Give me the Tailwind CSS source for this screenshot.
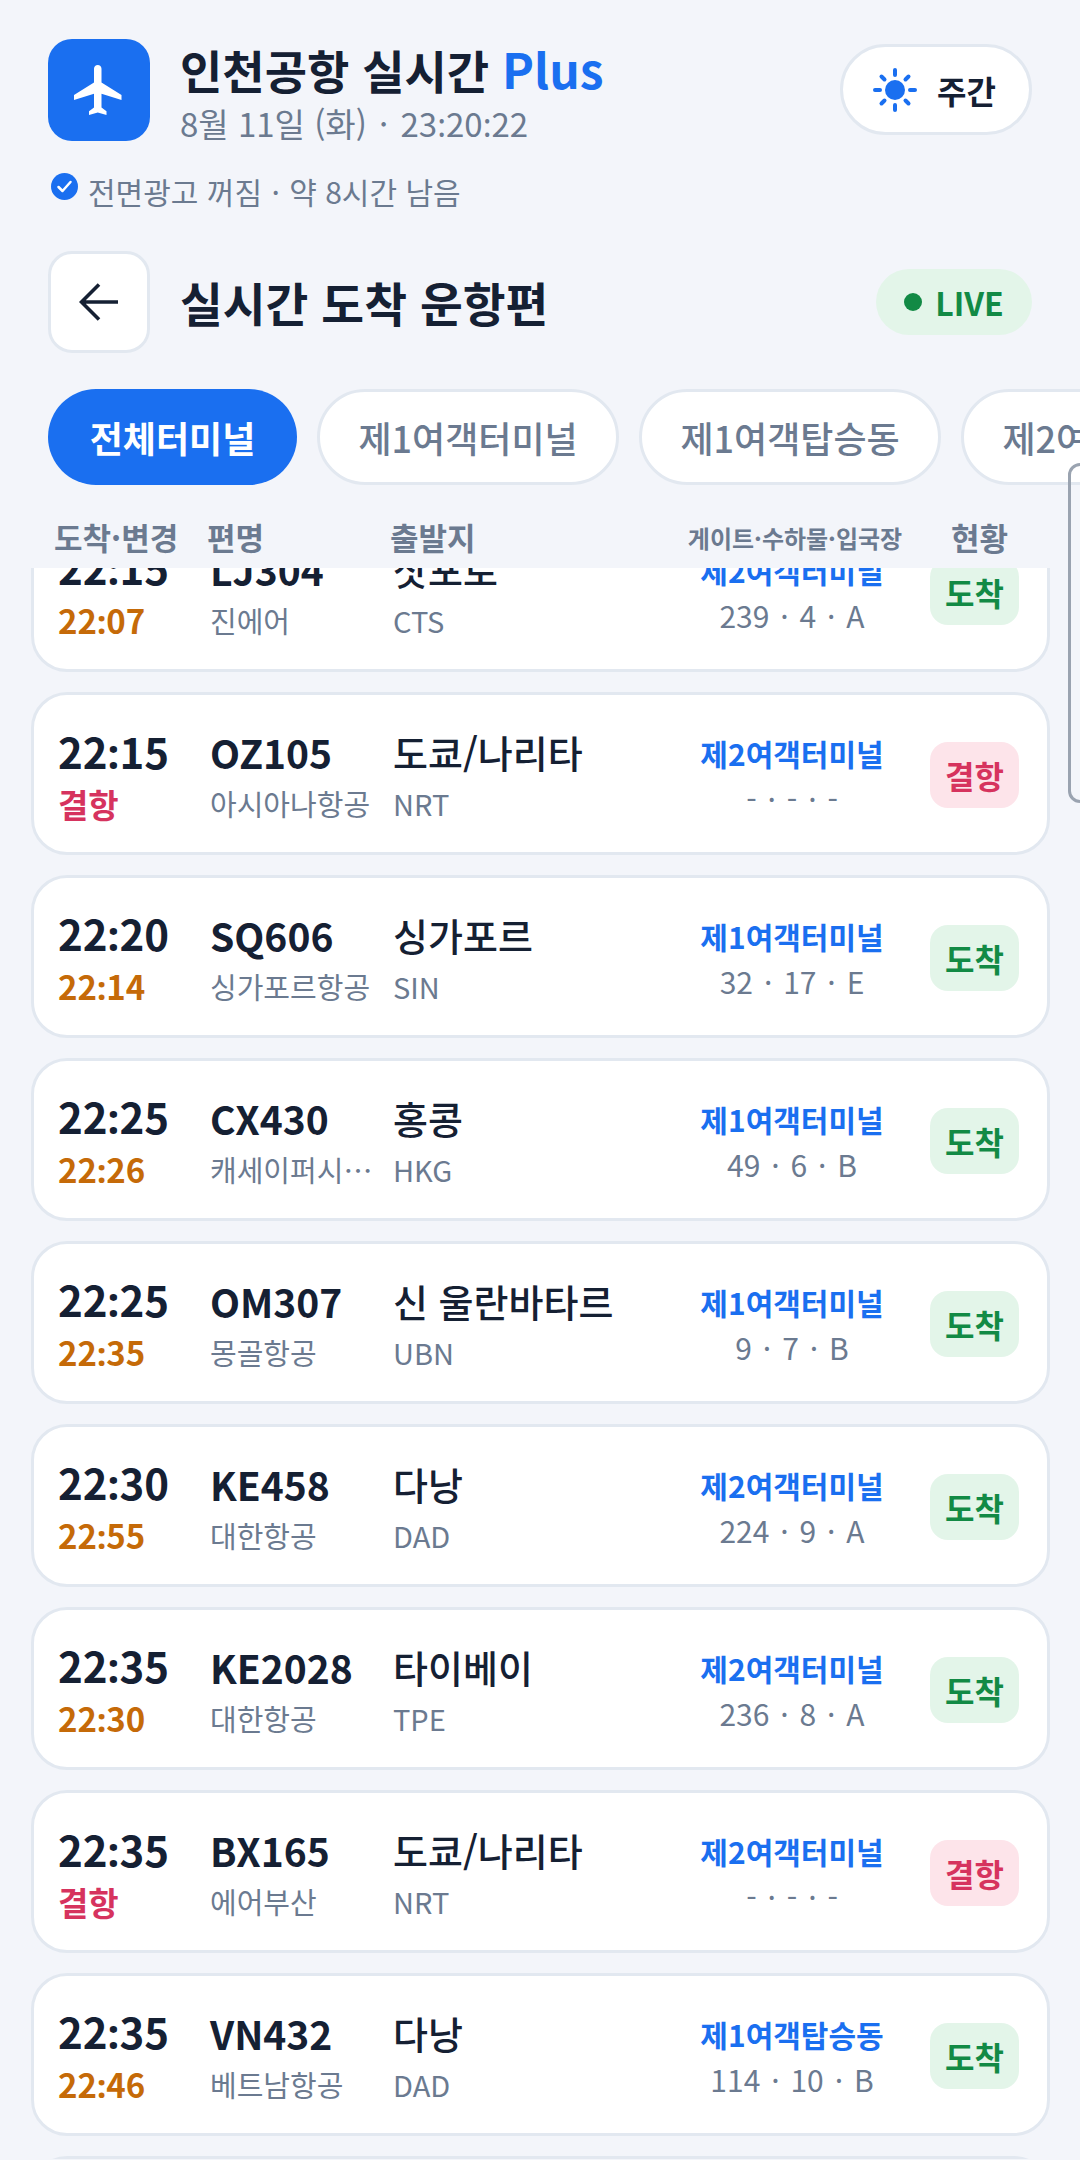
<!doctype html>
<html lang="ko"><head><meta charset="utf-8"><script src="https://cdn.jsdelivr.net/npm/@tailwindcss/browser@4"></script></head>
<body class="m-0 bg-[#f3f5fa]">
<div class="relative w-[1080px] h-[2160px] overflow-hidden bg-[#f3f5fa] font-['Noto_Sans_CJK_KR','Noto_Sans',sans-serif] text-[#152033]">
  <div class="flex items-start justify-between pl-[48px] pr-[48px] pt-[39px]">
    <div class="flex gap-[30px]">
      <div class="w-[102px] h-[102px] rounded-[24px] bg-[#1a6ff0] flex items-center justify-center">
        <svg width="60" height="60" viewBox="0 0 24 24" fill="#fff"><path d="M21 16v-2l-8-5V3.500c0-.83-.67-1.500-1.500-1.500S10 2.670 10 3.500V9l-8 5v2l8-2.500V19l-2 1.500V22l3.500-1 3.500 1v-1.500L13 19v-5.500l8 2.500z"/></svg>
      </div>
      <div class="flex flex-col h-[102px]">
        <div class="text-[46px] leading-[60px] font-bold -mt-[1px]">인천공항 실시간 <span class="text-[48px] text-[#1a6ff0]">Plus</span></div>
        <div class="text-[33px] leading-[42px] text-[#6b7a90] mt-[3px]">8월 11일 (화) <span class="mx-[3px]">·</span> 23<span class="font-['Noto_Sans']">:</span>20<span class="font-['Noto_Sans']">:</span>22</div>
      </div>
    </div>
    <div class="mt-[5px] w-[192px] h-[91px] rounded-full bg-white border-[3px] border-[#e2e8f0] flex items-center justify-center gap-[17px]">
      <svg width="46" height="46" viewBox="0 0 46 46" fill="none" stroke="#1a6ff0" stroke-width="4" stroke-linecap="round" class="-ml-[2px] -translate-x-[2px]"><circle cx="23" cy="23" r="10" fill="#1a6ff0" stroke="none"/><path d="M23 3v5M23 38v5M3 23h5M38 23h5M9.500 9.500l3 3M33.500 33.500l3 3M9.500 36.500l3-3M33.500 12.500l3-3"/></svg>
      <span class="text-[32px] font-bold">주간</span>
    </div>
  </div>
  <div class="flex items-center gap-[10px] pl-[51px] mt-[30px] h-[40px]">
    <svg width="27" height="27" viewBox="0 0 27 27" class="-mt-[10px]"><circle cx="13.500" cy="13.500" r="13.500" fill="#1a6ff0"/><path d="M7.500 14l4 4 8-9" fill="none" stroke="#fff" stroke-width="2.500" stroke-linecap="round" stroke-linejoin="round"/></svg>
    <span class="text-[30px] leading-[40px] text-[#6b7a90]">전면광고 꺼짐 <span class="mx-[1px]">·</span> 약 8시간 남음</span>
  </div>
  <div class="flex items-center justify-between pl-[48px] pr-[48px] mt-[40px]">
    <div class="flex items-center gap-[30px]">
      <div class="w-[102px] h-[102px] rounded-[24px] bg-white border-[3px] border-[#e2e8f0] flex items-center justify-center">
        <svg width="40" height="40" viewBox="0 0 40 40" fill="none" stroke="#152033" stroke-width="3.600"><path d="M39 20H3M20 2.500L2.500 20 20 37.500"/></svg>
      </div>
      <div class="text-[46.5px] leading-[60px] font-bold">실시간 도착 운항편</div>
    </div>
    <div class="w-[156px] h-[66px] rounded-full bg-[#e3f5e9] flex items-center justify-center gap-[13px]">
      <span class="w-[18px] h-[18px] rounded-full bg-[#128a45]"></span>
      <span class="text-[32px] font-bold text-[#128a45]">LIVE</span>
    </div>
  </div>
  <div class="flex gap-[20px] pl-[48px] mt-[36px] h-[96px] w-[1400px]">
    <div class="w-[249px] shrink-0 rounded-full bg-[#1a6ff0] text-white text-[36px] font-bold flex items-center justify-center">전체터미널</div>
    <div class="w-[302px] shrink-0 rounded-full bg-white border-[3px] border-[#e2e8f0] text-[#6b7a90] text-[36px] font-medium flex items-center justify-center">제1여객터미널</div>
    <div class="w-[302px] shrink-0 rounded-full bg-white border-[3px] border-[#e2e8f0] text-[#6b7a90] text-[36px] font-medium flex items-center justify-center">제1여객탑승동</div>
    <div class="w-[302px] shrink-0 rounded-full bg-white border-[3px] border-[#e2e8f0] text-[#6b7a90] text-[36px] font-medium flex items-center justify-center">제2여객터미널</div>
  </div>
  <div class="relative flex items-center h-[83px] text-[#6b7a90] font-semibold text-[31px] pt-[22px]">
    <span class="ml-[54px] w-[153px] whitespace-nowrap">도착·변경</span>
    <span class="w-[183px]">편명</span>
    <span class="w-[285px]">출발지</span>
    <span class="w-[240px] text-center text-[24px] whitespace-nowrap">게이트·수하물·입국장</span>
    <span class="ml-[36px]">현황</span>
  </div>
  <div class="h-[1591px] overflow-hidden pl-[31px] pr-[30px] flex flex-col gap-[20px]">
    <div class="-mt-[59px] shrink-0 h-[163px] rounded-[36px] bg-white border-[3px] border-[#e2e8f0] flex items-center pl-[24px] pr-[28px]">
      <div class="w-[152px] pt-[4px]"><div class="text-[42px] leading-[52px] font-bold">22<span class="font-['Noto_Sans']">:</span>15</div><div class="text-[33px] leading-[44px] mt-[3px] font-bold text-[#c56a08]">22<span class="font-['Noto_Sans']">:</span>07</div></div>
      <div class="w-[183px] pt-[4px]"><div class="text-[39px] leading-[52px] font-bold">LJ304</div><div class="text-[29px] leading-[44px] mt-[3px] text-[#6b7a90] truncate w-[165px]">진에어</div></div>
      <div class="flex-1 pt-[4px]"><div class="text-[38px] leading-[52px] font-medium">삿포로</div><div class="text-[29px] leading-[44px] mt-[3px] text-[#6b7a90]">CTS</div></div>
      <div class="w-[224px] text-center mr-[26px] pt-[2px]"><div class="text-[30px] leading-[46px] font-bold text-[#1a6ff0]">제2여객터미널</div><div class="text-[30px] leading-[44px] text-[#6b7a90]">239 <span class="mx-[2.5px]">·</span> 4 <span class="mx-[2.5px]">·</span> A</div></div>
      <div class="w-[89px] h-[66px] mt-[2px] rounded-[18px] bg-[#e3f5e9] text-[#128a45] text-[32px] font-bold flex items-center justify-center">도착</div>
    </div>
    <div class="shrink-0 h-[163px] rounded-[36px] bg-white border-[3px] border-[#e2e8f0] flex items-center pl-[24px] pr-[28px]">
      <div class="w-[152px] pt-[4px]"><div class="text-[42px] leading-[52px] font-bold">22<span class="font-['Noto_Sans']">:</span>15</div><div class="text-[33px] leading-[44px] mt-[3px] font-bold text-[#d6335e]">결항</div></div>
      <div class="w-[183px] pt-[4px]"><div class="text-[39px] leading-[52px] font-bold">OZ105</div><div class="text-[29px] leading-[44px] mt-[3px] text-[#6b7a90] truncate w-[165px]">아시아나항공</div></div>
      <div class="flex-1 pt-[4px]"><div class="text-[38px] leading-[52px] font-medium">도쿄/나리타</div><div class="text-[29px] leading-[44px] mt-[3px] text-[#6b7a90]">NRT</div></div>
      <div class="w-[224px] text-center mr-[26px] pt-[2px]"><div class="text-[30px] leading-[46px] font-bold text-[#1a6ff0]">제2여객터미널</div><div class="text-[30px] leading-[44px] text-[#6b7a90]">- <span class="mx-[2.5px]">·</span> - <span class="mx-[2.5px]">·</span> -</div></div>
      <div class="w-[89px] h-[66px] mt-[2px] rounded-[18px] bg-[#fde4ea] text-[#d6335e] text-[32px] font-bold flex items-center justify-center">결항</div>
    </div>
    <div class="shrink-0 h-[163px] rounded-[36px] bg-white border-[3px] border-[#e2e8f0] flex items-center pl-[24px] pr-[28px]">
      <div class="w-[152px] pt-[4px]"><div class="text-[42px] leading-[52px] font-bold">22<span class="font-['Noto_Sans']">:</span>20</div><div class="text-[33px] leading-[44px] mt-[3px] font-bold text-[#c56a08]">22<span class="font-['Noto_Sans']">:</span>14</div></div>
      <div class="w-[183px] pt-[4px]"><div class="text-[39px] leading-[52px] font-bold">SQ606</div><div class="text-[29px] leading-[44px] mt-[3px] text-[#6b7a90] truncate w-[165px]">싱가포르항공</div></div>
      <div class="flex-1 pt-[4px]"><div class="text-[38px] leading-[52px] font-medium">싱가포르</div><div class="text-[29px] leading-[44px] mt-[3px] text-[#6b7a90]">SIN</div></div>
      <div class="w-[224px] text-center mr-[26px] pt-[2px]"><div class="text-[30px] leading-[46px] font-bold text-[#1a6ff0]">제1여객터미널</div><div class="text-[30px] leading-[44px] text-[#6b7a90]">32 <span class="mx-[2.5px]">·</span> 17 <span class="mx-[2.5px]">·</span> E</div></div>
      <div class="w-[89px] h-[66px] mt-[2px] rounded-[18px] bg-[#e3f5e9] text-[#128a45] text-[32px] font-bold flex items-center justify-center">도착</div>
    </div>
    <div class="shrink-0 h-[163px] rounded-[36px] bg-white border-[3px] border-[#e2e8f0] flex items-center pl-[24px] pr-[28px]">
      <div class="w-[152px] pt-[4px]"><div class="text-[42px] leading-[52px] font-bold">22<span class="font-['Noto_Sans']">:</span>25</div><div class="text-[33px] leading-[44px] mt-[3px] font-bold text-[#c56a08]">22<span class="font-['Noto_Sans']">:</span>26</div></div>
      <div class="w-[183px] pt-[4px]"><div class="text-[39px] leading-[52px] font-bold">CX430</div><div class="text-[29px] leading-[44px] mt-[3px] text-[#6b7a90] truncate w-[165px]">캐세이퍼시픽항공</div></div>
      <div class="flex-1 pt-[4px]"><div class="text-[38px] leading-[52px] font-medium">홍콩</div><div class="text-[29px] leading-[44px] mt-[3px] text-[#6b7a90]">HKG</div></div>
      <div class="w-[224px] text-center mr-[26px] pt-[2px]"><div class="text-[30px] leading-[46px] font-bold text-[#1a6ff0]">제1여객터미널</div><div class="text-[30px] leading-[44px] text-[#6b7a90]">49 <span class="mx-[2.5px]">·</span> 6 <span class="mx-[2.5px]">·</span> B</div></div>
      <div class="w-[89px] h-[66px] mt-[2px] rounded-[18px] bg-[#e3f5e9] text-[#128a45] text-[32px] font-bold flex items-center justify-center">도착</div>
    </div>
    <div class="shrink-0 h-[163px] rounded-[36px] bg-white border-[3px] border-[#e2e8f0] flex items-center pl-[24px] pr-[28px]">
      <div class="w-[152px] pt-[4px]"><div class="text-[42px] leading-[52px] font-bold">22<span class="font-['Noto_Sans']">:</span>25</div><div class="text-[33px] leading-[44px] mt-[3px] font-bold text-[#c56a08]">22<span class="font-['Noto_Sans']">:</span>35</div></div>
      <div class="w-[183px] pt-[4px]"><div class="text-[39px] leading-[52px] font-bold">OM307</div><div class="text-[29px] leading-[44px] mt-[3px] text-[#6b7a90] truncate w-[165px]">몽골항공</div></div>
      <div class="flex-1 pt-[4px]"><div class="text-[38px] leading-[52px] font-medium">신 울란바타르</div><div class="text-[29px] leading-[44px] mt-[3px] text-[#6b7a90]">UBN</div></div>
      <div class="w-[224px] text-center mr-[26px] pt-[2px]"><div class="text-[30px] leading-[46px] font-bold text-[#1a6ff0]">제1여객터미널</div><div class="text-[30px] leading-[44px] text-[#6b7a90]">9 <span class="mx-[2.5px]">·</span> 7 <span class="mx-[2.5px]">·</span> B</div></div>
      <div class="w-[89px] h-[66px] mt-[2px] rounded-[18px] bg-[#e3f5e9] text-[#128a45] text-[32px] font-bold flex items-center justify-center">도착</div>
    </div>
    <div class="shrink-0 h-[163px] rounded-[36px] bg-white border-[3px] border-[#e2e8f0] flex items-center pl-[24px] pr-[28px]">
      <div class="w-[152px] pt-[4px]"><div class="text-[42px] leading-[52px] font-bold">22<span class="font-['Noto_Sans']">:</span>30</div><div class="text-[33px] leading-[44px] mt-[3px] font-bold text-[#c56a08]">22<span class="font-['Noto_Sans']">:</span>55</div></div>
      <div class="w-[183px] pt-[4px]"><div class="text-[39px] leading-[52px] font-bold">KE458</div><div class="text-[29px] leading-[44px] mt-[3px] text-[#6b7a90] truncate w-[165px]">대한항공</div></div>
      <div class="flex-1 pt-[4px]"><div class="text-[38px] leading-[52px] font-medium">다낭</div><div class="text-[29px] leading-[44px] mt-[3px] text-[#6b7a90]">DAD</div></div>
      <div class="w-[224px] text-center mr-[26px] pt-[2px]"><div class="text-[30px] leading-[46px] font-bold text-[#1a6ff0]">제2여객터미널</div><div class="text-[30px] leading-[44px] text-[#6b7a90]">224 <span class="mx-[2.5px]">·</span> 9 <span class="mx-[2.5px]">·</span> A</div></div>
      <div class="w-[89px] h-[66px] mt-[2px] rounded-[18px] bg-[#e3f5e9] text-[#128a45] text-[32px] font-bold flex items-center justify-center">도착</div>
    </div>
    <div class="shrink-0 h-[163px] rounded-[36px] bg-white border-[3px] border-[#e2e8f0] flex items-center pl-[24px] pr-[28px]">
      <div class="w-[152px] pt-[4px]"><div class="text-[42px] leading-[52px] font-bold">22<span class="font-['Noto_Sans']">:</span>35</div><div class="text-[33px] leading-[44px] mt-[3px] font-bold text-[#c56a08]">22<span class="font-['Noto_Sans']">:</span>30</div></div>
      <div class="w-[183px] pt-[4px]"><div class="text-[39px] leading-[52px] font-bold">KE2028</div><div class="text-[29px] leading-[44px] mt-[3px] text-[#6b7a90] truncate w-[165px]">대한항공</div></div>
      <div class="flex-1 pt-[4px]"><div class="text-[38px] leading-[52px] font-medium">타이베이</div><div class="text-[29px] leading-[44px] mt-[3px] text-[#6b7a90]">TPE</div></div>
      <div class="w-[224px] text-center mr-[26px] pt-[2px]"><div class="text-[30px] leading-[46px] font-bold text-[#1a6ff0]">제2여객터미널</div><div class="text-[30px] leading-[44px] text-[#6b7a90]">236 <span class="mx-[2.5px]">·</span> 8 <span class="mx-[2.5px]">·</span> A</div></div>
      <div class="w-[89px] h-[66px] mt-[2px] rounded-[18px] bg-[#e3f5e9] text-[#128a45] text-[32px] font-bold flex items-center justify-center">도착</div>
    </div>
    <div class="shrink-0 h-[163px] rounded-[36px] bg-white border-[3px] border-[#e2e8f0] flex items-center pl-[24px] pr-[28px]">
      <div class="w-[152px] pt-[4px]"><div class="text-[42px] leading-[52px] font-bold">22<span class="font-['Noto_Sans']">:</span>35</div><div class="text-[33px] leading-[44px] mt-[3px] font-bold text-[#d6335e]">결항</div></div>
      <div class="w-[183px] pt-[4px]"><div class="text-[39px] leading-[52px] font-bold">BX165</div><div class="text-[29px] leading-[44px] mt-[3px] text-[#6b7a90] truncate w-[165px]">에어부산</div></div>
      <div class="flex-1 pt-[4px]"><div class="text-[38px] leading-[52px] font-medium">도쿄/나리타</div><div class="text-[29px] leading-[44px] mt-[3px] text-[#6b7a90]">NRT</div></div>
      <div class="w-[224px] text-center mr-[26px] pt-[2px]"><div class="text-[30px] leading-[46px] font-bold text-[#1a6ff0]">제2여객터미널</div><div class="text-[30px] leading-[44px] text-[#6b7a90]">- <span class="mx-[2.5px]">·</span> - <span class="mx-[2.5px]">·</span> -</div></div>
      <div class="w-[89px] h-[66px] mt-[2px] rounded-[18px] bg-[#fde4ea] text-[#d6335e] text-[32px] font-bold flex items-center justify-center">결항</div>
    </div>
    <div class="shrink-0 h-[163px] rounded-[36px] bg-white border-[3px] border-[#e2e8f0] flex items-center pl-[24px] pr-[28px]">
      <div class="w-[152px] pt-[4px]"><div class="text-[42px] leading-[52px] font-bold">22<span class="font-['Noto_Sans']">:</span>35</div><div class="text-[33px] leading-[44px] mt-[3px] font-bold text-[#c56a08]">22<span class="font-['Noto_Sans']">:</span>46</div></div>
      <div class="w-[183px] pt-[4px]"><div class="text-[39px] leading-[52px] font-bold">VN432</div><div class="text-[29px] leading-[44px] mt-[3px] text-[#6b7a90] truncate w-[165px]">베트남항공</div></div>
      <div class="flex-1 pt-[4px]"><div class="text-[38px] leading-[52px] font-medium">다낭</div><div class="text-[29px] leading-[44px] mt-[3px] text-[#6b7a90]">DAD</div></div>
      <div class="w-[224px] text-center mr-[26px] pt-[2px]"><div class="text-[30px] leading-[46px] font-bold text-[#1a6ff0]">제1여객탑승동</div><div class="text-[30px] leading-[44px] text-[#6b7a90]">114 <span class="mx-[2.5px]">·</span> 10 <span class="mx-[2.5px]">·</span> B</div></div>
      <div class="w-[89px] h-[66px] mt-[2px] rounded-[18px] bg-[#e3f5e9] text-[#128a45] text-[32px] font-bold flex items-center justify-center">도착</div>
    </div>
    <div class="shrink-0 h-[163px] rounded-[36px] bg-white border-[3px] border-[#e2e8f0]"></div>
  </div>
  <div class="absolute left-[1068px] top-[463px] w-[40px] h-[340px] rounded-[12px] border-[3px] border-[#9aa3b0]"></div>
</div>
</body></html>
